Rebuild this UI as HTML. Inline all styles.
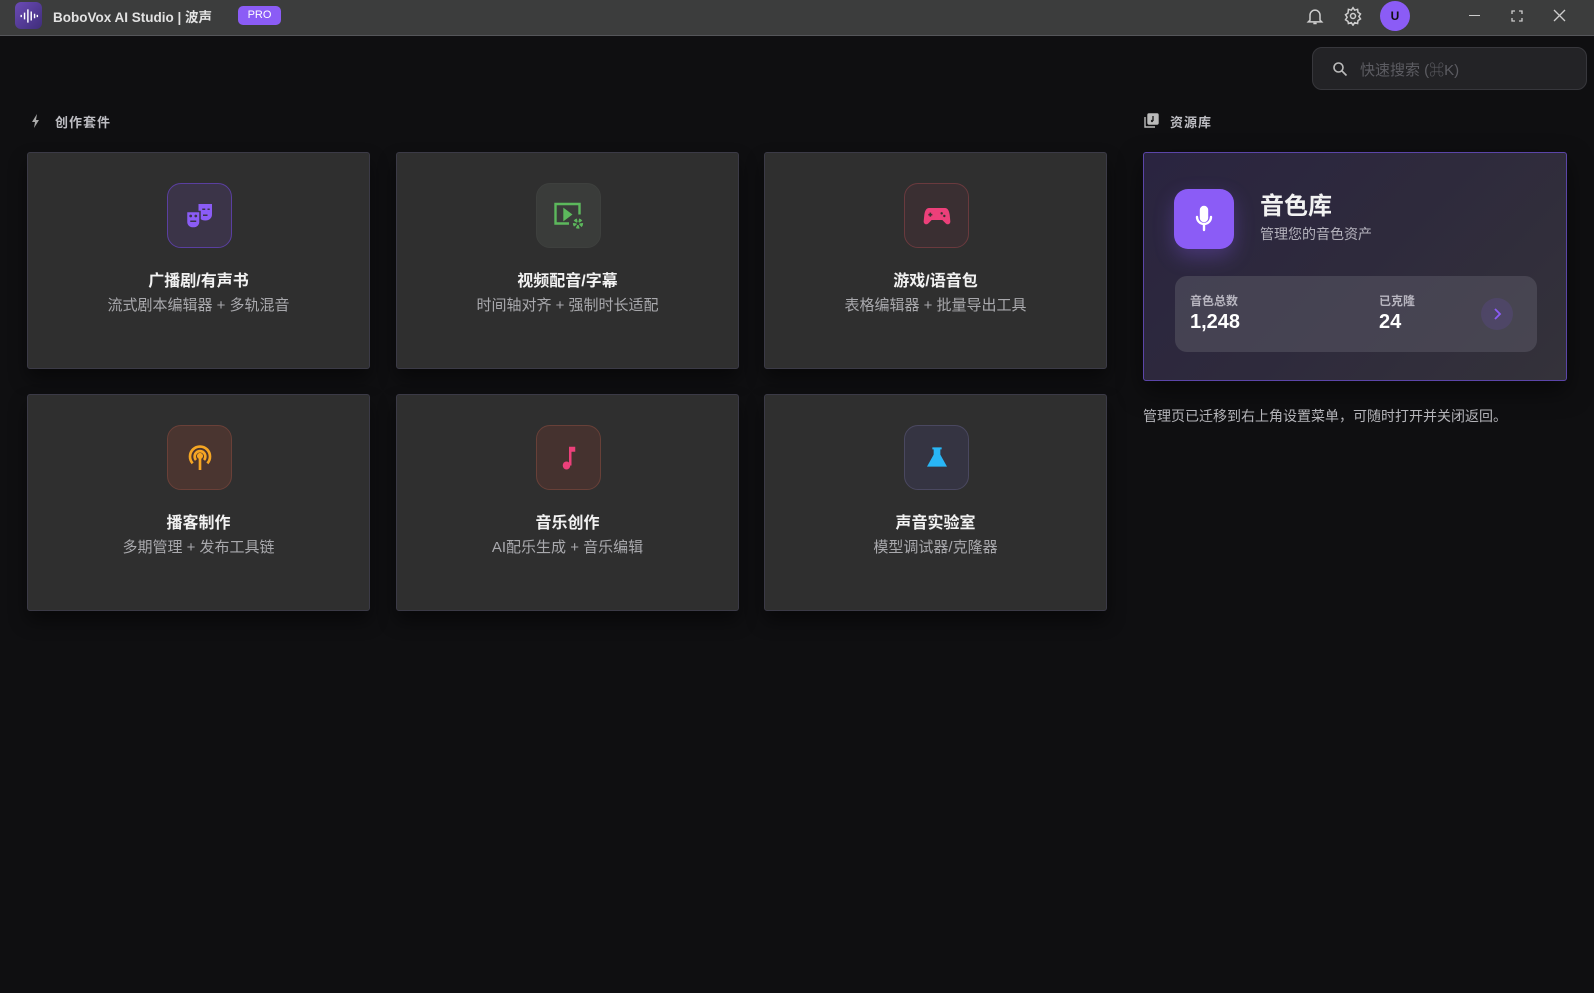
<!DOCTYPE html>
<html><head><meta charset="utf-8"><style>
*{box-sizing:border-box;margin:0;padding:0}
body{width:1594px;height:993px;background:#0f0f11;font-family:"Liberation Sans","Noto Sans CJK SC",sans-serif;color:#eee;position:relative;overflow:hidden}
.tb{position:absolute;left:0;top:0;width:1594px;height:36px;background:#3c3d3d;border-bottom:1px solid #55565a}
.abs{position:absolute}
.card{position:absolute;width:343px;height:217px;background:#2f2f2f;border:1px solid #3b3a46;border-radius:3px;box-shadow:0 10px 18px rgba(0,0,0,.45);text-align:center}
.ic{position:absolute;left:139px;top:30px;width:65px;height:65px;border-radius:14px;display:flex;align-items:center;justify-content:center}
.ct{position:absolute;left:0;right:0;top:114px;font-size:16px;font-weight:bold;color:#f2f2f2}
.cs{position:absolute;left:0;right:0;top:141px;font-size:15px;color:#a9a9ad}
.sh{position:absolute;font-size:13px;font-weight:bold;color:#bdbdc2;letter-spacing:1px}
</style></head><body>
<div class="tb">
 <div class="abs" style="left:15px;top:2px;width:27px;height:27px;border-radius:6px;background:linear-gradient(135deg,#6b4bb5,#3f2d7a);display:flex;align-items:center;justify-content:center">
  <svg width="20" height="16" viewBox="0 0 18 14" stroke="#fff" stroke-width="1.3"><path d="M2 6v2M5 4v6M8 1v12M11 3v8M14 5v4M16.5 6v2"/></svg>
 </div>
 <div class="abs" style="left:53px;top:6px;font-size:13.5px;font-weight:bold;color:#e2e2e2">BoboVox AI Studio | 波声</div>
 <div class="abs" style="left:238px;top:6px;width:43px;height:19px;border-radius:5px;background:#8b5cf6;color:#fff;font-size:11px;text-align:center;line-height:19px">PRO</div>
 <svg class="abs" style="left:1305px;top:6px" width="20" height="20" viewBox="0 0 24 24" fill="none" stroke="#cfcfcf" stroke-width="1.8"><path d="M6 17V11a6 6 0 0 1 12 0v6l2 2H4z M10 21h4"/></svg>
 <svg class="abs" style="left:1343px;top:6px" width="20" height="20" viewBox="0 0 24 24" fill="none" stroke="#cfcfcf" stroke-width="1.8"><circle cx="12" cy="12" r="3"/><path d="M12 2l2 3 3.5-1 .5 3.5 3 2-2 3 2 3-3 2-.5 3.5-3.5-1-2 3-2-3-3.5 1L6 18.5l-3-2 2-3-2-3 3-2L6.5 4l3.5 1z"/></svg>
 <div class="abs" style="left:1380px;top:1px;width:30px;height:30px;border-radius:50%;background:#8b5cf6;color:#111;font-size:12px;font-weight:bold;text-align:center;line-height:30px">U</div>
 <div class="abs" style="left:1469px;top:15px;width:11px;height:1px;background:#ccc"></div>
 <svg class="abs" style="left:1511px;top:10px" width="12" height="12" viewBox="0 0 12 12" fill="none" stroke="#ccc" stroke-width="1.3"><path d="M1 4V1h3M8 1h3v3M11 8v3H8M4 11H1V8"/></svg>
 <svg class="abs" style="left:1553px;top:9px" width="13" height="13" viewBox="0 0 13 13" stroke="#ccc" stroke-width="1.3"><path d="M1 1l11 11M12 1L1 12"/></svg>
</div>
<div class="abs" style="left:1312px;top:47px;width:275px;height:43px;border-radius:10px;background:#232326;border:1px solid #37373c">
 <svg class="abs" style="left:19px;top:13px" width="16" height="16" viewBox="0 0 16 16" fill="none" stroke="#bbb" stroke-width="1.6"><circle cx="6.5" cy="6.5" r="4.5"/><path d="M10 10l4.5 4.5"/></svg>
 <div class="abs" style="left:47px;top:11px;font-size:15px;color:#5c5c62">快速搜索 (⌘K)</div>
</div>
<svg class="abs" style="left:31px;top:114px" width="10" height="14" viewBox="0 0 10 14" fill="#aaa"><path d="M6 0L1 8h3l-1 6 5-8H5z"/></svg>
<div class="sh" style="left:55px;top:112px">创作套件</div>
<svg class="abs" style="left:1144px;top:113px" width="15" height="15" viewBox="0 0 15 15" fill="none" stroke="#bbb" stroke-width="1.4"><rect x="4" y="1" width="10" height="10" rx="1" fill="#bbb"/><path d="M1 4v10h10"/><path d="M9 3v5" stroke="#222"/><circle cx="8" cy="8" r="1.2" fill="#222" stroke="none"/></svg>
<div class="sh" style="left:1170px;top:112px">资源库</div>

<div class="card" style="left:27px;top:152px"><div class="ic" style="background:#3b3448;border:1px solid #5a3fa0">
<svg width="36" height="36" viewBox="0 0 24 24" fill="#8b5cf6"><path d="M11 4h9v7c0 2.5-2 4-4.5 4S11 13.5 11 11z"/><path d="M3 9h9v7c0 2.5-2 4-4.5 4S3 18.5 3 16z" stroke="#3b3448" stroke-width="1"/><circle cx="5.8" cy="12" r=".9" fill="#3b3448"/><circle cx="9.2" cy="12" r=".9" fill="#3b3448"/><path d="M5.5 15.5h4" stroke="#3b3448" stroke-width="1"/><path d="M13.5 7.5h2M17 7.5h1.5M14 11.5l3 0" stroke="#3b3448" stroke-width="1"/></svg></div>
<div class="ct">广播剧/有声书</div><div class="cs">流式剧本编辑器 + 多轨混音</div></div>

<div class="card" style="left:396px;top:152px"><div class="ic" style="background:#3a3c3a;border:1px solid #3e403e">
<svg width="36" height="36" viewBox="0 0 24 24" fill="none" stroke="#5cb85c" stroke-width="1.6"><path d="M12 17H3V4h16v7"/><path d="M9 8v6l4-3z" fill="#5cb85c"/><circle cx="18" cy="17" r="2.2" stroke-width="2.4" stroke-dasharray="1.7 1"/></svg></div>
<div class="ct">视频配音/字幕</div><div class="cs">时间轴对齐 + 强制时长适配</div></div>

<div class="card" style="left:764px;top:152px"><div class="ic" style="background:#3a2f32;border:1px solid #6a3a3e">
<svg width="32" height="32" viewBox="0 0 24 24" fill="#ec407a"><path d="M6 6h12c2 0 3 2 3.5 5l.5 5c0 2-2 3-3.5 1.5L16 15H8l-2.5 2.5C4 19 2 18 2 16l.5-5C3 8 4 6 6 6z"/><path d="M7 9.5v3M5.5 11h3" stroke="#3a2f32" stroke-width="1.2"/><circle cx="15.5" cy="10" r=".9" fill="#3a2f32"/><circle cx="17.5" cy="12" r=".9" fill="#3a2f32"/></svg></div>
<div class="ct">游戏/语音包</div><div class="cs">表格编辑器 + 批量导出工具</div></div>

<div class="card" style="left:27px;top:394px"><div class="ic" style="background:#4a3530;border:1px solid #6a4038">
<svg width="32" height="32" viewBox="0 0 24 24" fill="none" stroke="#f5a623" stroke-width="2"><path d="M6.5 16A7.5 7.5 0 1 1 17.5 16"/><path d="M9 13.5a4 4 0 1 1 6 0"/><circle cx="12" cy="10.5" r="1.3" fill="#f5a623"/><path d="M12 11v10"/></svg></div>
<div class="ct">播客制作</div><div class="cs">多期管理 + 发布工具链</div></div>

<div class="card" style="left:396px;top:394px"><div class="ic" style="background:#45322f;border:1px solid #684038">
<svg width="30" height="30" viewBox="0 0 24 24" fill="#ec407a"><path d="M12 3h5v4h-3v11h-2z"/><ellipse cx="10" cy="18" rx="3" ry="3.2"/></svg></div>
<div class="ct">音乐创作</div><div class="cs">AI配乐生成 + 音乐编辑</div></div>

<div class="card" style="left:764px;top:394px"><div class="ic" style="background:#353442;border:1px solid #4a4860">
<svg width="32" height="32" viewBox="0 0 24 24" fill="#29b6f6"><path d="M8.5 4h7v1.5h-1v4l5 9H4.5l5-9v-4h-1z"/></svg></div>
<div class="ct">声音实验室</div><div class="cs">模型调试器/克隆器</div></div>

<div class="abs" style="left:1143px;top:152px;width:424px;height:229px;border:1px solid #5b45a8;border-radius:3px;background:linear-gradient(135deg,#2a2440 0%,#2e2a3c 50%,#34323a 100%);box-shadow:0 10px 24px rgba(0,0,0,.5)">
 <div class="abs" style="left:30px;top:36px;width:60px;height:60px;border-radius:14px;background:#8b5cf6;display:flex;align-items:center;justify-content:center;box-shadow:0 8px 20px rgba(139,92,246,.3)">
  <svg width="24" height="28" viewBox="0 0 24 28" fill="none" stroke="#fff" stroke-width="2.4" stroke-linecap="round"><rect x="9" y="2" width="6" height="14" rx="3" fill="#fff"/><path d="M5 12a7 7 0 0 0 14 0M12 19v6"/></svg>
 </div>
 <div class="abs" style="left:116px;top:33px;font-size:24px;font-weight:bold;color:#f2f2f2">音色库</div>
 <div class="abs" style="left:116px;top:71px;font-size:14px;color:#b5b3bd">管理您的音色资产</div>
 <div class="abs" style="left:31px;top:123px;width:362px;height:76px;border-radius:12px;background:rgba(90,88,100,.55)">
  <div class="abs" style="left:15px;top:16px;font-size:12px;font-weight:bold;color:#b8b6c0">音色总数</div>
  <div class="abs" style="left:15px;top:35px;font-size:20px;font-weight:bold;color:#fff">1,248</div>
  <div class="abs" style="left:204px;top:16px;font-size:12px;font-weight:bold;color:#b8b6c0">已克隆</div>
  <div class="abs" style="left:204px;top:35px;font-size:20px;font-weight:bold;color:#fff">24</div>
  <div class="abs" style="left:306px;top:22px;width:32px;height:32px;border-radius:50%;background:rgba(110,80,200,.18)"></div>
  <svg class="abs" style="left:315px;top:31px" width="14" height="14" viewBox="0 0 14 14" fill="none" stroke="#8b5cf6" stroke-width="1.8"><path d="M5 2l5 5-5 5"/></svg>
 </div>
</div>
<div class="abs" style="left:1143px;top:406px;font-size:14px;color:#b5b5ba">管理页已迁移到右上角设置菜单，可随时打开并关闭返回。</div>
</body></html>
